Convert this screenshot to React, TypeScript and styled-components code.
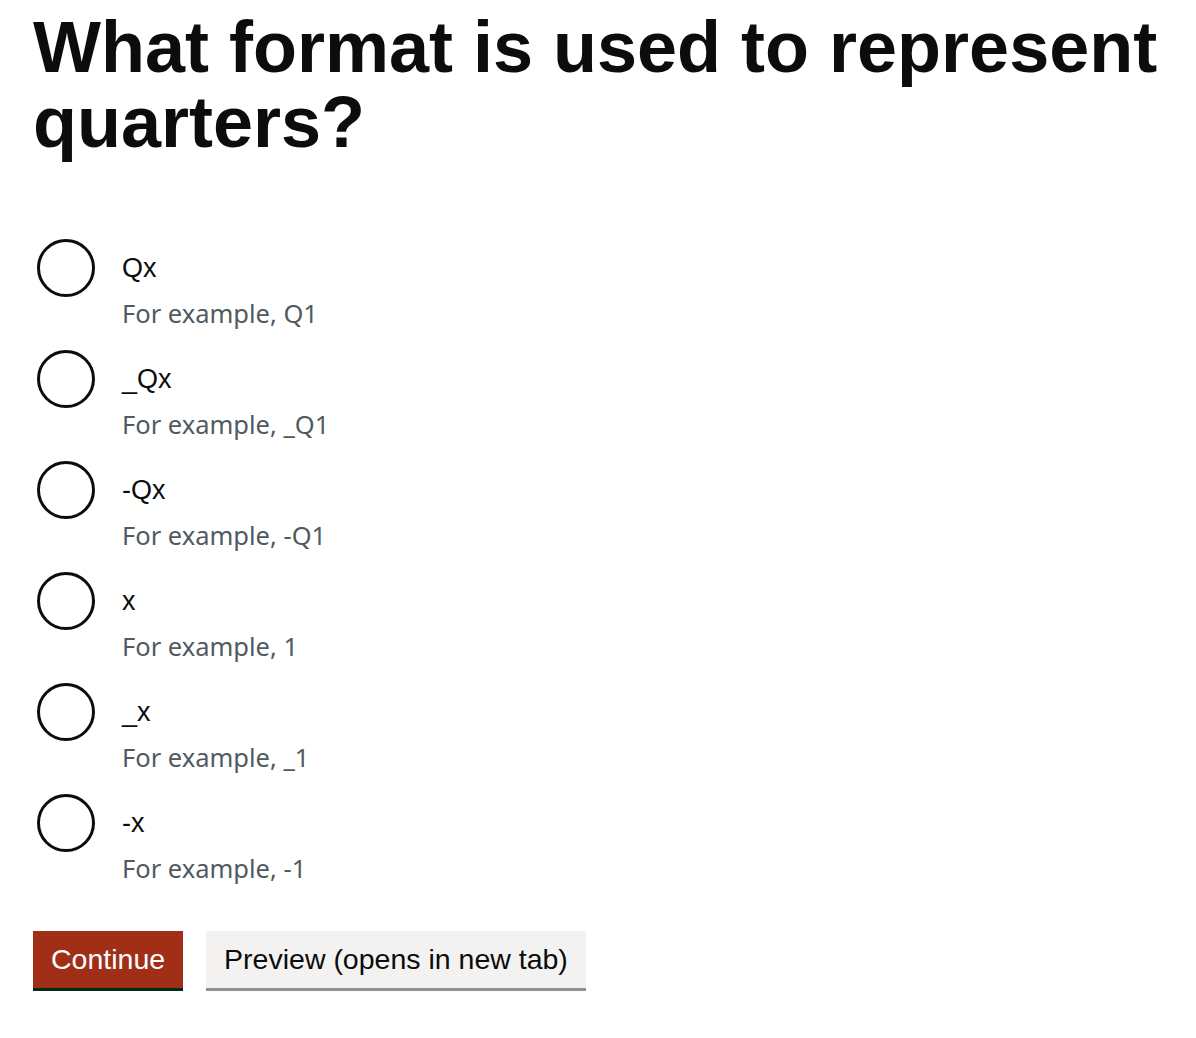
import React from 'react'
import styled, { createGlobalStyle } from 'styled-components'

const GlobalStyle = createGlobalStyle`
  html, body {
    margin: 0;
    padding: 0;
    background: #ffffff;
  }
  body {
    font-family: "Liberation Sans", Arial, sans-serif;
    color: #0b0c0c;
  }
`

const Page = styled.main`
  padding: 10px 0 40px 33px;
  max-width: 1150px;
`

const Heading = styled.h1`
  margin: 0 0 79px 0;
  font-family: "Liberation Sans", Arial, sans-serif;
  font-weight: 700;
  font-size: 72px;
  line-height: 75px;
  color: #0b0c0c;
`

const RadioList = styled.div`
  display: flex;
  flex-direction: column;
  gap: 21px;
  padding-left: 4px;
`

const RadioItem = styled.label`
  display: flex;
  align-items: flex-start;
  gap: 27px;
  cursor: pointer;
`

const Circle = styled.span`
  flex: none;
  box-sizing: border-box;
  width: 58px;
  height: 58px;
  border: 3px solid #0b0c0c;
  border-radius: 50%;
  background: #ffffff;
`

const TextCol = styled.span`
  display: flex;
  flex-direction: column;
`

const Label = styled.span`
  font-family: "Liberation Sans", Arial, sans-serif;
  font-size: 27px;
  line-height: 58px;
  color: #0b0c0c;
`

const Hint = styled.span`
  font-family: "Noto Sans", "Open Sans", sans-serif;
  font-size: 25.5px;
  line-height: 32px;
  color: #505a5f;
`

const ButtonRow = styled.div`
  display: flex;
  gap: 23px;
  margin-top: 47px;
`

const Button = styled.button<{ $variant: 'primary' | 'secondary' }>`
  box-sizing: border-box;
  height: 57px;
  margin: 0 0 3px 0;
  padding: 0 ${({ $variant }) => ($variant === 'primary' ? '18px' : '18px')};
  border: 0;
  border-radius: 0;
  font-family: "Liberation Sans", Arial, sans-serif;
  font-size: 28.5px;
  line-height: 57px;
  cursor: pointer;
  background: ${({ $variant }) => ($variant === 'primary' ? '#a12f18' : '#f3f2f1')};
  color: ${({ $variant }) => ($variant === 'primary' ? '#ffffff' : '#0b0c0c')};
  box-shadow: 0 3px 0 ${({ $variant }) => ($variant === 'primary' ? '#002d18' : '#929191')};
`

const options = [
  { label: 'Qx', hint: 'For example, Q1' },
  { label: '_Qx', hint: 'For example, _Q1' },
  { label: '-Qx', hint: 'For example, -Q1' },
  { label: 'x', hint: 'For example, 1' },
  { label: '_x', hint: 'For example, _1' },
  { label: '-x', hint: 'For example, -1' },
]

export default function App() {
  return (
    <>
      <GlobalStyle />
      <Page>
        <Heading>What format is used to represent quarters?</Heading>
        <RadioList>
          {options.map(o => (
            <RadioItem key={o.label}>
              <Circle />
              <TextCol>
                <Label>{o.label}</Label>
                <Hint>{o.hint}</Hint>
              </TextCol>
            </RadioItem>
          ))}
        </RadioList>
        <ButtonRow>
          <Button $variant="primary">Continue</Button>
          <Button $variant="secondary">Preview (opens in new tab)</Button>
        </ButtonRow>
      </Page>
    </>
  )
}
